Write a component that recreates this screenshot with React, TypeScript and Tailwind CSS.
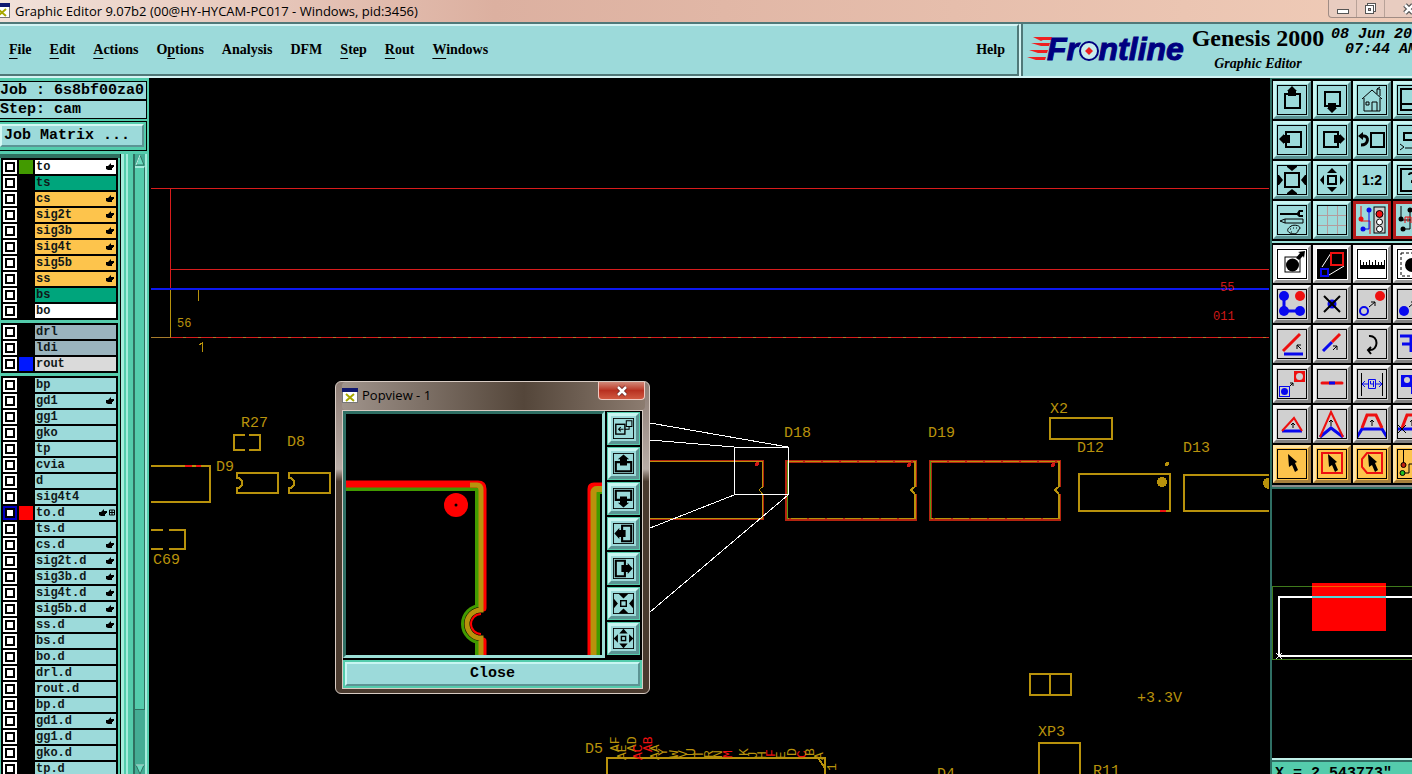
import { useState } from 'react';
import type { ReactNode } from 'react';
import { clsx } from 'clsx';

type Layer = { name: string; tone: string; hand?: boolean; swatch?: string; active?: boolean };

const WHITE = 'bg-white';
const GREEN = 'bg-[#00a57c]';
const AMBER = 'bg-[#fdc44c]';
const SLATE = 'bg-[#9ab4be]';
const CYAN = 'bg-[#9cdada]';

const layerGroups: Layer[][] = [
  [
    { name: 'to', tone: WHITE, hand: true, swatch: 'bg-[#429a00]' },
    { name: 'ts', tone: GREEN },
    { name: 'cs', tone: AMBER, hand: true },
    { name: 'sig2t', tone: AMBER, hand: true },
    { name: 'sig3b', tone: AMBER, hand: true },
    { name: 'sig4t', tone: AMBER, hand: true },
    { name: 'sig5b', tone: AMBER, hand: true },
    { name: 'ss', tone: AMBER, hand: true },
    { name: 'bs', tone: GREEN },
    { name: 'bo', tone: WHITE },
  ],
  [
    { name: 'drl', tone: SLATE },
    { name: 'ldi', tone: SLATE },
    { name: 'rout', tone: 'bg-[#dadada]', swatch: 'bg-[#0018ff]' },
  ],
  [
    { name: 'bp', tone: CYAN },
    { name: 'gd1', tone: CYAN, hand: true },
    { name: 'gg1', tone: CYAN },
    { name: 'gko', tone: CYAN },
    { name: 'tp', tone: CYAN },
    { name: 'cvia', tone: CYAN },
    { name: 'd', tone: CYAN },
    { name: 'sig4t4', tone: CYAN },
    { name: 'to.d', tone: CYAN, hand: true, swatch: 'bg-[#ff0000]', active: true },
    { name: 'ts.d', tone: CYAN },
    { name: 'cs.d', tone: CYAN, hand: true },
    { name: 'sig2t.d', tone: CYAN, hand: true },
    { name: 'sig3b.d', tone: CYAN, hand: true },
    { name: 'sig4t.d', tone: CYAN, hand: true },
    { name: 'sig5b.d', tone: CYAN, hand: true },
    { name: 'ss.d', tone: CYAN, hand: true },
    { name: 'bs.d', tone: CYAN },
    { name: 'bo.d', tone: CYAN },
    { name: 'drl.d', tone: CYAN },
    { name: 'rout.d', tone: CYAN },
    { name: 'bp.d', tone: CYAN },
    { name: 'gd1.d', tone: CYAN, hand: true },
    { name: 'gg1.d', tone: CYAN },
    { name: 'gko.d', tone: CYAN },
    { name: 'tp.d', tone: CYAN },
  ],
];

// [before, mnemonic, after]
const menus: [string, string, string][] = [
  ['', 'F', 'ile'],
  ['', 'E', 'dit'],
  ['', 'A', 'ctions'],
  ['O', 'p', 'tions'],
  ['Analysis', '', ''],
  ['DFM', '', ''],
  ['', 'S', 'tep'],
  ['', 'R', 'out'],
  ['', 'W', 'indows'],
];

const MONO = "font-['Liberation_Mono',monospace] font-bold";
const SERIF = "font-['Liberation_Serif',serif]";
const SANS = "font-['Open_Sans','Noto_Sans',sans-serif]";

const bevels = {
  cyan: 'bg-[#9cdada] border-t-[#c8f6f2] border-l-[#c8f6f2] border-b-[#5c9494] border-r-[#5c9494]',
  white: 'bg-white border-t-[#f4f4f4] border-l-[#f4f4f4] border-b-[#9a9a9a] border-r-[#9a9a9a]',
  gray: 'bg-[#d0d0d0] border-t-[#f4f4f4] border-l-[#f4f4f4] border-b-[#828282] border-r-[#828282]',
  amber: 'bg-[#fdc44c] border-t-[#ffe4a4] border-l-[#ffe4a4] border-b-[#a8803c] border-r-[#a8803c]',
  red: 'bg-[#9cdada] border-[#b41c1c]',
};

type Tool = { label: string; kind: keyof typeof bevels; art: ReactNode };

const RED = '#ee1010';
const BLUE = '#0808ee';

const up = (
  <>
    <rect x="8" y="9" width="15" height="14" fill="none" stroke="#000" strokeWidth="2" />
    <path d="M15 1l5 5h-1v5h-8v-5h-1z" />
  </>
);
const down = (
  <>
    <rect x="8" y="7" width="15" height="14" fill="none" stroke="#000" strokeWidth="2" />
    <path d="M15 28l5-5h-1v-5h-8v5h-1z" />
  </>
);
const left = (
  <>
    <rect x="9" y="7" width="15" height="15" fill="none" stroke="#000" strokeWidth="2" />
    <path d="M2 14l5-5v1h6v8h-6v1z" />
  </>
);
const right = (
  <>
    <rect x="7" y="7" width="14" height="15" fill="none" stroke="#000" strokeWidth="2" />
    <path d="M28 14l-5-5v1h-6v8h6v1z" />
  </>
);
const arrowsIn = <path d="M10 1h10v1l-5 4-5-4zM10 29h10v-1l-5-4-5 4zM1 10v10h1l4-5-4-5zM29 10v10h-1l-4-5 4-5z" />;
const arrowsOut = <path d="M15 3l5 5H10zM15 27l5-5H10zM3 15l4-5v10zM27 15l-4-5v10z" />;
const cursor = <path d="M11 5l9 8-2 1 3 7-3 2-3-7-3 2z" />;

const viewTools: Tool[] = [
  { label: 'Pan up', kind: 'cyan', art: up },
  { label: 'Pan down', kind: 'cyan', art: down },
  {
    label: 'Home',
    kind: 'cyan',
    art: <path d="M5 14l10-9 10 9M7 13v13h16V13M15 26v-9h5v9M9 17h3v3H9zM20 9V4h3v7M20 4l3-2" fill="none" stroke="#000" />,
  },
  { label: 'Overview', kind: 'cyan', art: <path d="M4 4h24v21H4zM4 19h24" fill="none" stroke="#000" strokeWidth="2" /> },
  { label: 'Pan left', kind: 'cyan', art: left },
  { label: 'Pan right', kind: 'cyan', art: right },
  {
    label: 'Previous view',
    kind: 'cyan',
    art: (
      <>
        <rect x="14" y="8" width="13" height="14" fill="none" stroke="#000" strokeWidth="2" />
        <path d="M4 11h3c5 0 5 9-3 9" fill="none" stroke="#000" strokeWidth="3" />
        <path d="M1 11l5-4v8z" />
      </>
    ),
  },
  {
    label: 'Named view',
    kind: 'cyan',
    art: (
      <>
        <path d="M30 8H7v7h23" fill="none" stroke="#000" strokeWidth="2" />
        <path d="M3 19l4 3-4 3M8 23h22" fill="none" stroke="#000" />
      </>
    ),
  },
  {
    label: 'Zoom out',
    kind: 'cyan',
    art: (
      <>
        <rect x="8" y="8" width="14" height="14" fill="none" stroke="#000" strokeWidth="2" />
        {arrowsIn}
      </>
    ),
  },
  {
    label: 'Zoom in',
    kind: 'cyan',
    art: (
      <>
        <rect x="11" y="11" width="8" height="8" fill="none" stroke="#000" strokeWidth="2" />
        {arrowsOut}
      </>
    ),
  },
  {
    label: 'Scale',
    kind: 'cyan',
    art: (
      <text x="15" y="20" textAnchor="middle" fontSize="14" fontWeight="700" fontFamily="Liberation Sans">
        1:2
      </text>
    ),
  },
  {
    label: 'View query',
    kind: 'cyan',
    art: (
      <>
        <rect x="4" y="4" width="22" height="22" fill="none" stroke="#000" strokeWidth="2" />
        <path d="M12 10q0-2 3-2t3 3-3 5v2" fill="none" stroke="#000" strokeWidth="2" />
      </>
    ),
  },
  {
    label: 'Setup',
    kind: 'cyan',
    art: (
      <>
        <path d="M3 8h17l2-3h4v2h-3v3h3v2h-4l-2-2H3z" />
        <path d="M3 16l5-2h18v4H8zM8 14v4" fill="none" stroke="#000" />
        <path d="M13 22c2-3 10-2 10 1 0 2-2 1-2 3s-4 4-8 2-2-5 0-6zM13 24h1M16 23h1M19 23h1M14 27h1" fill="none" stroke="#000" />
      </>
    ),
  },
  {
    label: 'Grid',
    kind: 'cyan',
    art: <path d="M10.500 1v28M20.500 1v28M1 10.500h28M1 20.500h28" stroke="#b49c9c" fill="none" />,
  },
  {
    label: 'Snap to net',
    kind: 'red',
    art: (
      <>
        <path d="M4 1v15h9v13" fill="none" stroke={RED} />
        <path d="M12 4v20H6" fill="none" stroke={BLUE} />
        <circle cx="4" cy="14" r="2.500" fill={RED} />
        <circle cx="12" cy="5" r="2.500" fill={BLUE} />
        <circle cx="6" cy="24" r="2.500" fill={BLUE} />
        <rect x="17" y="2" width="11" height="26" fill="#d0d0d0" stroke="#000" />
        <circle cx="22.500" cy="9" r="3.500" fill={RED} stroke="#000" />
        <circle cx="22.500" cy="17" r="3" fill="#fff" stroke="#000" />
        <circle cx="22.500" cy="24" r="3" fill="#fff" stroke="#000" />
      </>
    ),
  },
  {
    label: 'Net rules',
    kind: 'red',
    art: (
      <>
        <path d="M4 1v14h10M13 4v20H6" fill="none" stroke="#000" />
        <path d="M8 18V12h6v6M11 12v5" fill="none" stroke={RED} />
        <circle cx="4" cy="14" r="2.500" />
        <circle cx="13" cy="5" r="2.500" />
        <circle cx="6" cy="24" r="2.500" />
      </>
    ),
  },
];

const thinArrow = <path d="M12 18l6-5M14 13h4v4" fill="none" stroke="#000" />;

const editTools: Tool[] = [
  {
    label: 'Select feature',
    kind: 'white',
    art: (
      <>
        <rect x="8" y="8" width="15" height="15" fill="none" stroke="#000" />
        <circle cx="15.500" cy="16" r="6.500" />
        <path d="M19 9l3 2 4-4 1 2 1-7-7 1 2 1z" />
      </>
    ),
  },
  {
    label: 'Popview',
    kind: 'white',
    art: (
      <>
        <rect width="30" height="30" />
        <path d="M5 18l9-14M12 26l15-9" stroke="#fff" />
        <rect x="14" y="4" width="12" height="12" fill="none" stroke={RED} strokeWidth="2" />
        <rect x="4" y="20" width="7" height="7" fill="none" stroke={BLUE} strokeWidth="2" />
      </>
    ),
  },
  {
    label: 'Measure',
    kind: 'white',
    art: (
      <>
        <path d="M3 16h25v4H3z" />
        <path d="M3.500 11v7M6.500 13v5M9.500 13v5M12.500 11v7M15.500 13v5M18.500 11v7M21.500 13v5M24.500 13v5M27.500 11v7" stroke="#000" />
      </>
    ),
  },
  {
    label: 'Pad frame',
    kind: 'white',
    art: (
      <>
        <rect x="4" y="4" width="23" height="23" fill="none" stroke="#000" strokeDasharray="3 2" />
        <circle cx="15" cy="16" r="7" />
      </>
    ),
  },
  {
    label: 'Chain',
    kind: 'gray',
    art: (
      <>
        <path d="M7 7v15h16" fill="none" stroke={BLUE} strokeWidth="3" />
        <circle cx="7" cy="7" r="5" fill={BLUE} />
        <circle cx="7" cy="22" r="5" fill={BLUE} />
        <circle cx="23" cy="22" r="5" fill={BLUE} />
        <circle cx="23" cy="7" r="5" fill={RED} />
      </>
    ),
  },
  {
    label: 'Delete',
    kind: 'gray',
    art: (
      <>
        <circle cx="15" cy="15" r="4.500" fill={BLUE} />
        <path d="M7 7l16 16M23 7L7 23" stroke="#000" strokeWidth="2" />
      </>
    ),
  },
  {
    label: 'Move',
    kind: 'gray',
    art: (
      <>
        {thinArrow}
        <circle cx="7" cy="22" r="4" fill="none" stroke={BLUE} strokeWidth="2" />
        <circle cx="23" cy="7" r="5" fill={RED} />
      </>
    ),
  },
  {
    label: 'Copy',
    kind: 'gray',
    art: (
      <>
        {thinArrow}
        <circle cx="7" cy="22" r="5" fill={BLUE} />
        <circle cx="23" cy="7" r="5" fill={RED} />
      </>
    ),
  },
  {
    label: 'Rotate line',
    kind: 'gray',
    art: (
      <>
        <path d="M6 22L23 5" stroke={RED} strokeWidth="3" />
        <path d="M7 25h19" stroke={BLUE} strokeWidth="3" />
        <path d="M24 20l-4-4M20 20v-4h4" fill="none" stroke="#000" />
      </>
    ),
  },
  {
    label: 'Extend line',
    kind: 'gray',
    art: (
      <>
        <path d="M6 22l9-9" stroke={BLUE} strokeWidth="3" />
        <path d="M15 13l8-8" stroke={RED} strokeWidth="3" />
        <path d="M16 21l4-4M16 17h4v4" fill="none" stroke="#000" />
      </>
    ),
  },
  { label: 'Rotate', kind: 'gray', art: <path d="M12 7c10-1 10 15 0 14M14 18l-3 3 3 4" fill="none" stroke="#000" strokeWidth="2" /> },
  { label: 'Mirror', kind: 'gray', art: <path d="M3 7h11v16M5 15h9M19 7v17M19 15h8" fill="none" stroke={BLUE} strokeWidth="3" /> },
  {
    label: 'Replace symbol',
    kind: 'gray',
    art: (
      <>
        <rect x="17" y="2" width="11" height="11" fill={RED} />
        <circle cx="22.500" cy="7.500" r="3.500" fill="#d0d0d0" />
        <rect x="2.500" y="17.500" width="10" height="10" fill="none" stroke={BLUE} />
        <circle cx="7.500" cy="22.500" r="3.500" fill={BLUE} />
        <path d="M13 17l3-3M13 14h3v3" fill="none" stroke="#000" />
      </>
    ),
  },
  {
    label: 'Break line',
    kind: 'gray',
    art: (
      <>
        <path d="M5 14h20" stroke={RED} strokeWidth="3" strokeLinecap="round" />
        <path d="M12 14h6" stroke={BLUE} strokeWidth="3" />
      </>
    ),
  },
  {
    label: 'Spacing',
    kind: 'gray',
    art: (
      <>
        <path d="M4.500 4v23M25.500 4v23" stroke="#000" />
        <path d="M11.500 10.500h7v9h-7zM13.500 12v3h3M16.500 12v6M5 15h6M8 12l-3 3 3 3M19 15h6M22 12l3 3-3 3" fill="none" stroke={BLUE} />
      </>
    ),
  },
  {
    label: 'Merge shapes',
    kind: 'gray',
    art: (
      <>
        <path d="M4 6h22v19H14v-7H4z" fill={BLUE} />
        <circle cx="10" cy="11" r="3" fill="#d0d0d0" />
      </>
    ),
  },
  {
    label: 'Stretch corner',
    kind: 'gray',
    art: (
      <>
        <path d="M5 22h20" stroke={BLUE} strokeWidth="3" />
        <path d="M5 22L17 9l8 13" fill="none" stroke={RED} strokeWidth="2" />
        <path d="M16 19v-5M14 16l2-2 2 2" fill="none" stroke="#000" />
      </>
    ),
  },
  {
    label: 'Stretch peak',
    kind: 'gray',
    art: (
      <>
        <path d="M3 28l11-9 12 9" fill="none" stroke={BLUE} strokeWidth="3" />
        <path d="M3 28L14 3l12 25" fill="none" stroke={RED} strokeWidth="2" />
        <path d="M14 17v-6M12 13l2-2 2 2" fill="none" stroke="#000" />
      </>
    ),
  },
  {
    label: 'Stretch segment',
    kind: 'gray',
    art: (
      <>
        <path d="M0 28l5-8h20l5 8" fill="none" stroke={BLUE} strokeWidth="3" />
        <path d="M5 19l5-13h9l6 13" fill="none" stroke={RED} strokeWidth="3" />
        <path d="M15 17v-6M13 13l2-2 2 2" fill="none" stroke="#000" />
      </>
    ),
  },
  {
    label: 'Stretch endpoint',
    kind: 'gray',
    art: (
      <>
        <path d="M0 20h28" stroke={BLUE} strokeWidth="3" />
        <path d="M5 19l5-13h9l6 13" fill="none" stroke={RED} strokeWidth="3" />
        <path d="M1 16l8 8M9 16l-8 8M15 17v-6M13 13l2-2 2 2" fill="none" stroke="#000" />
      </>
    ),
  },
  { label: 'Select', kind: 'amber', art: cursor },
  {
    label: 'Select in box',
    kind: 'amber',
    art: (
      <>
        <rect x="5" y="4" width="20" height="20" fill="none" stroke={RED} strokeWidth="2" />
        {cursor}
      </>
    ),
  },
  {
    label: 'Select in polygon',
    kind: 'amber',
    art: (
      <>
        <path d="M10 4h15v20H10l-5-6v-8z" fill="none" stroke={RED} strokeWidth="2" />
        {cursor}
      </>
    ),
  },
  {
    label: 'Select net',
    kind: 'amber',
    art: (
      <>
        <path d="M6.500 1v15M6 24h6v-9h8v14" fill="none" stroke="#000" />
        <circle cx="6.500" cy="16" r="2.500" fill="#c02010" stroke="#000" />
        <circle cx="5.500" cy="24" r="2.500" fill="#20c020" stroke="#000" />
      </>
    ),
  },
];

const popArrow = (
  <>
    <path d="M10 13H4v13h22V13h-6" fill="none" stroke="#000" strokeWidth="3" />
    <path d="M15 2l8 7h-3v9H10V9H7z" />
  </>
);

const popTools: { label: string; art: ReactNode }[] = [
  {
    label: 'Pick area',
    art: (
      <>
        <rect x="4" y="9" width="13" height="14" fill="none" stroke="#000" strokeWidth="2" />
        <path d="M19 4h8v8h-8zM23 12v4h-6M15 16H8M11 13l-3 3 3 3" fill="none" stroke="#000" strokeWidth="1.500" />
      </>
    ),
  },
  { label: 'Popview up', art: popArrow },
  { label: 'Popview down', art: <g transform="rotate(180 15 15)">{popArrow}</g> },
  { label: 'Popview left', art: <g transform="rotate(-90 15 15)">{popArrow}</g> },
  { label: 'Popview right', art: <g transform="rotate(90 15 15)">{popArrow}</g> },
  {
    label: 'Popview zoom out',
    art: (
      <>
        <rect x="11" y="11" width="8" height="8" fill="none" stroke="#000" strokeWidth="2" />
        <path d="M8 1h14l-7 7zM8 29h14l-7-7zM1 8v14l6-7zM29 8v14l-6-7z" />
      </>
    ),
  },
  {
    label: 'Popview zoom in',
    art: (
      <>
        <rect x="12" y="12" width="6" height="6" fill="none" stroke="#000" strokeWidth="2" />
        <path d="M15 1l6 7H9zM15 29l6-7H9zM1 15l6-6v12zM29 15l-6-6v12z" />
      </>
    ),
  },
];

function ToolButton({ tool }: { tool: Tool }) {
  return (
    <button type="button" aria-label={tool.label} className={clsx('flex size-[38px] items-center justify-center border-3', bevels[tool.kind])}>
      <svg className="size-[30px]" viewBox="0 0 30 30">
        {tool.art}
        {tool.kind !== 'red' && <rect x="0.500" y="0.500" width="29" height="29" fill="none" stroke="#000" />}
      </svg>
    </button>
  );
}

function ToolGrid({ tools }: { tools: Tool[] }) {
  return (
    <div className="grid w-max grid-cols-4 gap-[2px] bg-black p-[2px] pl-[1px]">
      {tools.map((tool) => (
        <ToolButton key={tool.label} tool={tool} />
      ))}
    </div>
  );
}

function AppIcon() {
  return (
    <svg className="size-4 shrink-0" viewBox="0 0 16 16">
      <rect x="0.500" y="1.500" width="15" height="13" fill="#fff" stroke="#777" />
      <rect width="16" height="4" fill="#101870" />
      <path d="M4 6l8 7M12 6l-8 7" stroke="#a8a800" strokeWidth="2" />
    </svg>
  );
}

function TitleBar() {
  return (
    <div className={clsx('flex h-[22px] shrink-0 items-center overflow-hidden bg-linear-to-r from-[#f2e2da] via-[#dcb0a0] via-35% to-[#f0ccb8]', SANS)}>
      <div className="-ml-[6px]">
        <AppIcon />
      </div>
      <span className="ml-[5px] flex-1 whitespace-nowrap text-[13px] leading-5 text-black">
        Graphic Editor 9.07b2 (00@HY-HYCAM-PC017 - Windows, pid:3456)
      </span>
      <div className="-mr-[22px] flex h-[18px] shrink-0 self-start rounded-b border border-t-0 border-[#a08c84] bg-[#e8ccc0]">
        <button type="button" aria-label="Minimize" className="flex w-7 items-center justify-center border-r border-[#b8a298]">
          <svg className="size-4" viewBox="0 0 16 16"><rect x="2.500" y="8.500" width="11" height="4" fill="#fff" stroke="#555" /></svg>
        </button>
        <button type="button" aria-label="Restore" className="flex w-7 items-center justify-center border-r border-[#b8a298]">
          <svg className="size-4" viewBox="0 0 16 16">
            <rect x="4.500" y="2.500" width="8" height="8" fill="#fff" stroke="#555" />
            <rect x="2.500" y="4.500" width="8" height="8" fill="#fff" stroke="#555" />
            <rect x="5.500" y="7.500" width="2" height="2" fill="#caa" stroke="#555" />
          </svg>
        </button>
        <button type="button" aria-label="Close window" className="flex w-12 items-center justify-center">
          <svg className="size-4" viewBox="0 0 16 16"><path d="M4 4l8 8M12 4l-8 8" stroke="#555" strokeWidth="5" /><path d="M4 4l8 8M12 4l-8 8" stroke="#fff" strokeWidth="2.500" /></svg>
        </button>
      </div>
    </div>
  );
}

function Logo() {
  return (
    <svg className="h-8 w-[162px] shrink-0" viewBox="0 0 162 32">
      <path d="M6 3h19v3H16l-2 1zM4 9h19l-1 3h-8zM2 16h19l-1 3h-9zM0 23h19l-1 3H9z" fill="#ee2020" />
      <text x="20" y="26" fontSize="32" fontWeight="700" fontStyle="italic" fontFamily="Liberation Sans" fill="#000080" stroke="#000080">
        Frontline
      </text>
      <circle cx="62" cy="17" r="11" fill="#9cdada" />
      <circle cx="62" cy="17" r="9" fill="#c8ecec" stroke="#000080" strokeWidth="2" />
      <path d="M62 13l4 4-4 4-4-4z" fill="#ee2020" />
    </svg>
  );
}

function Header() {
  return (
    <header className="flex h-14 shrink-0 border-t-2 border-b-2 border-t-[#507878] border-b-[#d4f4f4] bg-[#9cdada] text-black">
      <nav className={clsx('flex min-w-0 flex-1 items-center gap-[18px] border-2 border-l-0 border-t-[#d4f4f4] border-r-[#507878] border-b-[#507878] pr-3 pb-[2px] pl-[9px] text-[14px] font-bold', SERIF)}>
        {menus.map(([pre, key, post]) => (
          <button key={pre + key + post} type="button">
            {pre}
            {key && <span className="underline decoration-1 underline-offset-4">{key}</span>}
            {post}
          </button>
        ))}
        <button type="button" className="ml-auto">Help</button>
      </nav>
      <div className="w-[2px] bg-[#d4f4f4]" />
      <div className="flex w-[391px] shrink-0 overflow-hidden border-l-2 border-[#507878] pl-1">
        <div className="flex items-center">
          <Logo />
        </div>
        <div className={clsx('w-[138px] shrink-0 pt-[1px] text-center font-bold', SERIF)}>
          <div className="whitespace-nowrap text-[24px] leading-[27px]">Genesis 2000</div>
          <div className="text-[14px] leading-6 italic">Graphic Editor</div>
        </div>
        <div className={clsx('ml-1 shrink-0 pt-[3px] text-[15px] leading-[15px] italic', MONO)}>
          <div className="whitespace-nowrap">08 Jun 20</div>
          <div className="whitespace-nowrap pl-[14px]">07:44 AM</div>
        </div>
      </div>
    </header>
  );
}

function LayerRow({ layer }: { layer: Layer }) {
  const [visible, setVisible] = useState(!!layer.active);
  const id = `layer-${layer.name}`;

  return (
    <li className="flex h-4 shrink-0 gap-[2px] py-px">
      <span className={clsx('flex w-[14px] items-center justify-center', layer.active ? 'bg-[#0000c0]' : 'bg-white')}>
        <input
          id={id}
          type="checkbox"
          checked={visible}
          onChange={(e) => setVisible(e.target.checked)}
          className="size-[10px] appearance-none border-2 border-black bg-white"
        />
      </span>
      <span className={clsx('w-[14px]', layer.swatch)} />
      <label htmlFor={id} className={clsx('flex w-[81px] items-center pl-px text-[12px] leading-[14px]', MONO, layer.tone)}>
        <span className="flex-1 text-[#101818]">{layer.name}</span>
        {layer.hand && (
          <svg className="mr-[2px] size-2" viewBox="0 0 8 8">
            <path d="M0 3h2l3-3v2h3v2H7v1H6v2H2L0 6z" />
          </svg>
        )}
        {layer.active && (
          <svg className="mr-px h-[7px] w-[6px]" viewBox="0 0 6 7">
            <path d="M.5 1h5v5h-5zM3 1v5M0 3.500h6" fill="none" stroke="#000" />
          </svg>
        )}
      </label>
    </li>
  );
}

function LayerPanel() {
  return (
    <aside className="flex w-[149px] shrink-0 flex-col bg-[#54ccac] pt-[3px]">
      <div className={clsx('mr-[2px] shrink-0 text-[15px]', MONO)}>
        <div className="h-[19px] overflow-hidden border border-l-0 border-black bg-[#9cdada] leading-[17px] whitespace-nowrap">Job : 6s8bf00za0</div>
        <div className="h-[19px] border border-l-0 border-black bg-[#9cdada] leading-[17px] whitespace-nowrap">Step: cam</div>
        <div className="mt-[2px] border border-l-0 border-black p-[2px] pl-0">
          <button type="button" className="h-[23px] w-full border-2 border-t-[#d4f8f4] border-l-[#d4f8f4] border-r-[#5c9494] border-b-[#5c9494] bg-[#9cdada] pl-[2px] text-left leading-[19px]">
            Job Matrix ...
          </button>
        </div>
      </div>
      <div className="mt-[3px] flex min-h-0 flex-1">
        <div className="flex min-w-0 flex-1 flex-col overflow-hidden border-t-4 border-[#2f7060]">
          <div className="flex flex-col gap-[3px] pl-px">
            {layerGroups.map((group, i) => (
              <ul key={i} className="w-[117px] border border-black bg-black pl-px">
                {group.map((layer) => (
                  <LayerRow key={layer.name} layer={layer} />
                ))}
              </ul>
            ))}
          </div>
        </div>
        <div className="flex w-[13px] border-l border-black">
          <div className="w-[3px] bg-[#a4ecdc]" />
          <div className="w-[2px] bg-[#54ccac]" />
          <div className="w-[2px] bg-[#a4ecdc]" />
        </div>
        <div className="mr-[2px] flex w-[14px] flex-col border-r-2 border-l-2 border-l-[#2f7060] border-r-[#a4ecdc] bg-[#44ac94]">
          <svg className="h-3 w-full" viewBox="0 0 10 12">
            <path d="M5 1l4 10H1z" fill="#6cdcc0" stroke="#2f7060" />
            <path d="M5 1L1 11" stroke="#c4f8ec" />
          </svg>
          <div className="min-h-0 flex-1">
            <div className="h-[91%] border-t-2 border-r border-b border-t-[#a4ecdc] border-r-[#2f7060] border-b-[#2f7060] bg-[#54ccac]" />
          </div>
          <svg className="h-[10px] w-full" viewBox="0 0 10 10">
            <path d="M1 1h8L5 10z" fill="#6cdcc0" stroke="#2f7060" />
            <path d="M1 1h8" stroke="#c4f8ec" />
          </svg>
        </div>
      </div>
    </aside>
  );
}

const GOLD = '#b8920c';

const refs: [number, number, string][] = [
  [241, 427, 'R27'],
  [287, 446, 'D8'],
  [216, 471, 'D9'],
  [153, 564, 'C69'],
  [784, 437, 'D18'],
  [928, 437, 'D19'],
  [1050, 413, 'X2'],
  [1077, 452, 'D12'],
  [1183, 452, 'D13'],
  [585, 753, 'D5'],
  [937, 778, 'D4'],
  [1038, 736, 'XP3'],
  [1093, 775, 'R11'],
  [1137, 702, '+3.3V'],
];

const pins: [number, number, string, string?][] = [
  [619, 752, 'AF'], [626, 760, 'AE'], [636, 752, 'AD'], [642, 760, 'AC', RED], [652, 752, 'AB', RED],
  [659, 760, 'AA'], [667, 756, 'Y'], [678, 758, 'W'], [687, 758, 'V'], [695, 756, 'U'],
  [703, 758, 'T'], [713, 758, 'R'], [722, 758, 'N'], [732, 758, 'M', RED], [748, 756, 'K'],
  [757, 759, 'J'], [766, 759, 'H'], [775, 757, 'F', RED], [785, 759, 'E'], [796, 756, 'D'],
  [806, 758, 'C', RED], [814, 756, 'B'], [823, 760, 'A'],
];

// Board coordinates start at the window's corner, the group shifts them into the canvas.
function Board() {
  return (
    <svg className="absolute inset-0 size-full" shapeRendering="crispEdges">
      <g transform="translate(-149 -78)" fill="none">
        <path d="M170.500 290V337M198.500 290V301" stroke={GOLD} />
        <path d="M151 337.500H1269" stroke="#a87c2c" />
        <path d="M151 188.500H1269M170.500 188V289M171 269.500H1269" stroke="#d81c1c" />
        <path d="M171 337.500H1269" stroke="#d81c1c" strokeDasharray="12 3" />
        <path d="M151 289H1269" stroke="#0c18f0" strokeWidth="2" />
        <path d="M199 345l3-2v9" stroke={GOLD} />

        <g stroke={GOLD} strokeWidth="2">
          <path d="M151 466H209.500V502H151M245 435H234V450H245M249 435H260V450H249" />
          <path d="M151 530H163M169 530H185V549H169M151 549H163" />
          <path d="M237 473H278V493H237V488H239Q242 487 242 483T239 478H237ZM289 473H330V493H289V488H291Q294 487 294 483T291 478H289Z" />
          <path d="M1050 418H1112V439H1050ZM1079 474H1170V511H1079ZM1269 475H1184V511H1269" />
          <path d="M1030 674H1071V695H1030ZM1050 674V695M1039 780V743H1080V780M607 780V758H825V780M818 758L825 768" />
        </g>
        <path d="M185 466H192M196 466H201M1160 511H1166" stroke={RED} strokeWidth="2" />
        <circle cx="1162" cy="482" r="5" fill={GOLD} />
        <path d="M1269 478V489Q1263 488 1263 483T1269 478" fill={GOLD} />
        <circle cx="1167" cy="464" r="2" fill={GOLD} />

        <g strokeWidth="3" stroke="#b42410">
          <path d="M650 461H763V487M763 494V519H650" strokeWidth="2" />
          <path d="M915 487V461H786V519H915V494M1059 487V461H930V519H1059V494" />
        </g>
        <g stroke={GOLD}>
          <path d="M650 461.500H762.500V487L759 490 762.500 494V518.500H650" />
          <path d="M787 461.500H914.500M914.500 518.500H787M931 461.500H1058.500M1058.500 518.500H931" strokeDasharray="16 2" />
          <path d="M914.500 461V487L911 490 914.500 494V519M1058.500 461V487L1055 490 1058.500 494V519" strokeWidth="2" />
          <path d="M787.500 461V519M930.500 461V519" stroke="#5c9a10" />
        </g>
        <g fill="#d01818">
          <circle cx="757" cy="464" r="2" />
          <circle cx="909" cy="465" r="2" />
          <circle cx="1053" cy="465" r="2" />
        </g>

        <path d="M734.500 447.500H788.500V494.500H734.500ZM650 423L788 447M650 440L734 447M734 495L650 528M788 495L650 612" stroke="#fff" />

        <g fill={GOLD} fontFamily="Liberation Mono" fontSize="15">
          {refs.map(([x, y, text]) => (
            <text key={text} x={x} y={y}>{text}</text>
          ))}
          <text x="177" y="327" fontSize="12">56</text>
          <text x="1213" y="320" fontSize="12" fill="#d01818">011</text>
          <text x="1220" y="291" fontSize="12" fill="#d01818">55</text>
          {pins.map(([x, y, text, color]) => (
            <text key={text} transform={`translate(${x} ${y}) rotate(-90)`} fontSize="13" fill={color}>{text}</text>
          ))}
          <text transform="translate(836 771) rotate(-90)" fontSize="13">1</text>
        </g>
      </g>
    </svg>
  );
}

function Popview() {
  return (
    <section
      aria-label="Popview - 1"
      className="absolute top-[303px] left-[186px] flex w-[315px] flex-col rounded-md border border-[#d8ccc4] bg-linear-to-b from-[#8c7c74] via-[#b8aca6] via-28% to-[#4a3a2e] to-32% px-[6px] pb-1"
    >
      <div className={clsx('-mr-[2px] flex h-7 items-center rounded bg-linear-to-r from-[#a0948c] via-[#54463a] via-60% to-[#8c7c70] text-[13px] text-black', SANS)}>
        <AppIcon />
        <span className="ml-1 flex-1">Popview - 1</span>
        <button
          type="button"
          aria-label="Close popview"
          className="flex h-[18px] w-[47px] items-center justify-center self-start rounded-b border border-t-0 border-[#f0c8c0] bg-linear-to-b from-[#d08878] via-[#b83020] to-[#d05840]"
        >
          <svg className="size-3" viewBox="0 0 12 12"><path d="M2 2l8 8M10 2l-8 8" stroke="#622" strokeWidth="4" /><path d="M2 2l8 8M10 2l-8 8" stroke="#fff" strokeWidth="2.500" /></svg>
        </button>
      </div>
      <div className="border border-[#d8ccc4] bg-black">
        <div className="flex">
          <div className="min-w-0 flex-1 border-3 border-t-[#2f6f64] border-l-[#2f6f64] border-r-[#9ce0d8] border-b-[#9ce0d8]">
            <svg className="block h-[241px] w-full">
              <g transform="translate(-346 -413)" fill="none">
                <path d="M346 488H477V606M477 640V656" stroke="#429a00" strokeWidth="4" />
                <path d="M346 483H478Q483 483 483 488V607M483 640V656" stroke="#f00" strokeWidth="7" strokeLinecap="round" />
                <path d="M481 604.500A18.500 18.500 0 0 0 481 641.500" stroke="#429a00" strokeWidth="3" />
                <path d="M481 613A10 10 0 0 0 481 633" stroke="#f00" strokeWidth="2" />
                <path d="M470 484H477Q481 484 481 489V609A14 14 0 0 0 481 637V656" stroke={GOLD} strokeWidth="5" />
                <path d="M598 656V491H604" stroke="#429a00" strokeWidth="4" />
                <path d="M590 656V488Q590 484 594 484H604" stroke="#f00" strokeWidth="5" strokeLinecap="round" />
                <path d="M593.500 656V491Q594 488 597 488H604" stroke={GOLD} strokeWidth="6" />
                <circle cx="456" cy="504" r="12" fill="#f00" />
                <circle cx="456" cy="504" r="1.500" fill="#000" />
              </g>
            </svg>
          </div>
          <div className="flex flex-col gap-[2px] bg-black px-[2px] py-px">
            {popTools.map((tool) => (
              <button
                key={tool.label}
                type="button"
                aria-label={tool.label}
                className="border border-[#54ccac] bg-[#9cdada]"
              >
                <span className={clsx('flex size-[31px] items-center justify-center border-3', bevels.cyan)}>
                  <svg className="size-[21px]" viewBox="0 0 30 30">
                    {tool.art}
                    <rect x="0.500" y="0.500" width="29" height="29" fill="none" stroke="#000" strokeWidth="1.500" />
                  </svg>
                </span>
              </button>
            ))}
          </div>
        </div>
        <div className="mt-[2px] border-2 border-[#54ccac]">
          <button
            type="button"
            className={clsx('block h-6 w-full border-2 border-t-[#c8f6f2] border-l-[#c8f6f2] border-r-[#5c9494] border-b-[#5c9494] bg-[#9cdada] text-[15px] leading-5 text-black', MONO)}
          >
            Close
          </button>
        </div>
      </div>
    </section>
  );
}

function ToolPanel() {
  return (
    <aside className="flex w-[142px] shrink-0 flex-col overflow-hidden border-l-2 border-[#2f6f64] bg-black">
      <div className="h-px shrink-0 bg-[#2f6f64]" />
      <ToolGrid tools={viewTools} />
      <div className="h-[2px] shrink-0 bg-[#9ce0d8]" />
      <ToolGrid tools={editTools} />
      <div className="h-[2px] shrink-0 bg-[#8c8c8c]" />
      <div className="h-[2px] shrink-0 bg-[#2f6f64]" />
      <svg className="min-h-0 w-full flex-1" shapeRendering="crispEdges">
        <g transform="translate(-1272 -489)" fill="none">
          <rect x="1312" y="583" width="74" height="48" fill="#f00" />
          <rect x="1272.500" y="586.500" width="180" height="73" stroke="#3f7a1c" />
          <path d="M1312 586.500h74" stroke="#f06000" />
          <rect x="1279" y="597" width="180" height="59" stroke="#fff" strokeWidth="2" />
          <path d="M1312 597h74" stroke="#54d8d8" strokeWidth="2" />
          <path d="M1276 653l6 6M1282 653l-6 6" stroke="#fff" />
        </g>
      </svg>
      <div className="h-[2px] shrink-0 bg-[#c0f0e8]" />
      <div className={clsx('h-[14px] shrink-0 overflow-hidden border-t-2 border-[#2f6f64] bg-[#54ccac] pt-1 pl-[3px] text-[15px] leading-[15px] whitespace-nowrap text-black', MONO)}>
        X = 2.543773"
      </div>
    </aside>
  );
}

export default function App() {
  return (
    <div className="flex h-screen flex-col overflow-hidden bg-black">
      <TitleBar />
      <Header />
      <div className="flex min-h-0 flex-1">
        <LayerPanel />
        <main className="relative min-w-0 flex-1 overflow-hidden bg-black">
          <Board />
          <Popview />
        </main>
        <ToolPanel />
      </div>
    </div>
  );
}
